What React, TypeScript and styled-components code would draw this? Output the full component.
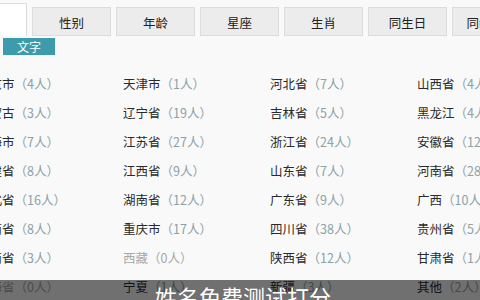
import React from "react";
import styled, { createGlobalStyle } from "styled-components";

const GlobalStyle = createGlobalStyle`
  html, body {
    margin: 0;
    padding: 0;
    background: #f9f9f9;
    font-family: "Liberation Serif", "Noto Sans CJK SC", serif;
    overflow: hidden;
  }
`;

const Page = styled.div`
  width: 480px;
  height: 300px;
  position: relative;
  overflow: hidden;
`;

const TabBar = styled.div`
  display: flex;
  gap: 5px;
  margin-left: -52px;
  padding-top: 7px;
  height: 29px;
  align-items: flex-end;
`;

const Tab = styled.div<{ $active?: boolean }>`
  flex: 0 0 79px;
  box-sizing: border-box;
  height: ${(p) => (p.$active ? "33px" : "29px")};
  border: 1px solid #dcdcdc;
  border-bottom: ${(p) => (p.$active ? "none" : "1px solid #dcdcdc")};
  background: ${(p) => (p.$active ? "#ffffff" : "#ececec")};
  display: flex;
  align-items: center;
  justify-content: center;
  padding-top: 1px;
  font-family: "Noto Sans CJK SC", sans-serif;
  font-size: 12.5px;
  color: #222;
`;

const Label = styled.div`
  margin: 2px 0 0 3px;
  width: 52px;
  height: 17px;
  background: #3d9cab;
  color: #fff;
  font-family: "Noto Sans CJK SC", sans-serif;
  font-size: 12px;
  line-height: 17px;
  text-align: center;
`;

const Grid = styled.div`
  display: grid;
  grid-template-columns: 146px 147px 147px 147px;
  grid-auto-rows: 29px;
  margin: 14px 0 0 -23px;
`;

const Cell = styled.div<{ $empty?: boolean }>`
  font-family: "Noto Sans CJK SC", sans-serif;
  font-size: 12.5px;
  line-height: 29px;
  white-space: nowrap;
  color: ${(p) => (p.$empty ? "#a8a8a8" : "#2a2a2a")};
`;

const Count = styled.span<{ $empty?: boolean }>`
  color: ${(p) => (p.$empty ? "#a8a8a8" : "#8aa2a8")};
`;

const Caption = styled.div`
  position: absolute;
  left: 0;
  right: 0;
  bottom: 0;
  height: 20px;
  background: rgba(0, 0, 0, 0.55);
  overflow: hidden;
  padding-left: 155px;
  box-sizing: border-box;
`;

const CaptionText = styled.div`
  color: #fff;
  font-family: "Noto Sans CJK SC", sans-serif;
  font-size: 22px;
  line-height: 22px;
  padding-top: 5px;
`;

const tabs = ["文字", "性别", "年龄", "星座", "生肖", "同生日", "同龄同乡"];

const provinces: [string, number][] = [
  ["北京市", 4], ["天津市", 1], ["河北省", 7], ["山西省", 4],
  ["内蒙古", 3], ["辽宁省", 19], ["吉林省", 5], ["黑龙江", 4],
  ["上海市", 7], ["江苏省", 27], ["浙江省", 24], ["安徽省", 12],
  ["福建省", 8], ["江西省", 9], ["山东省", 7], ["河南省", 28],
  ["湖北省", 16], ["湖南省", 12], ["广东省", 9], ["广西", 10],
  ["海南省", 8], ["重庆市", 17], ["四川省", 38], ["贵州省", 5],
  ["云南省", 3], ["西藏", 0], ["陕西省", 12], ["甘肃省", 1],
  ["青海省", 0], ["宁夏", 1], ["新疆", 3], ["其他", 2],
];

export default function App() {
  return (
    <Page>
      <GlobalStyle />
      <TabBar>
        {tabs.map((t, i) => (
          <Tab key={t} $active={i === 0}>
            {t}
          </Tab>
        ))}
      </TabBar>
      <Label>文字</Label>
      <Grid>
        {provinces.map(([name, n]) => (
          <Cell key={name} $empty={n === 0}>
            {name}
            <Count $empty={n === 0}>（{n}人）</Count>
          </Cell>
        ))}
      </Grid>
      <Caption>
        <CaptionText>姓名免费测试打分</CaptionText>
      </Caption>
    </Page>
  );
}
